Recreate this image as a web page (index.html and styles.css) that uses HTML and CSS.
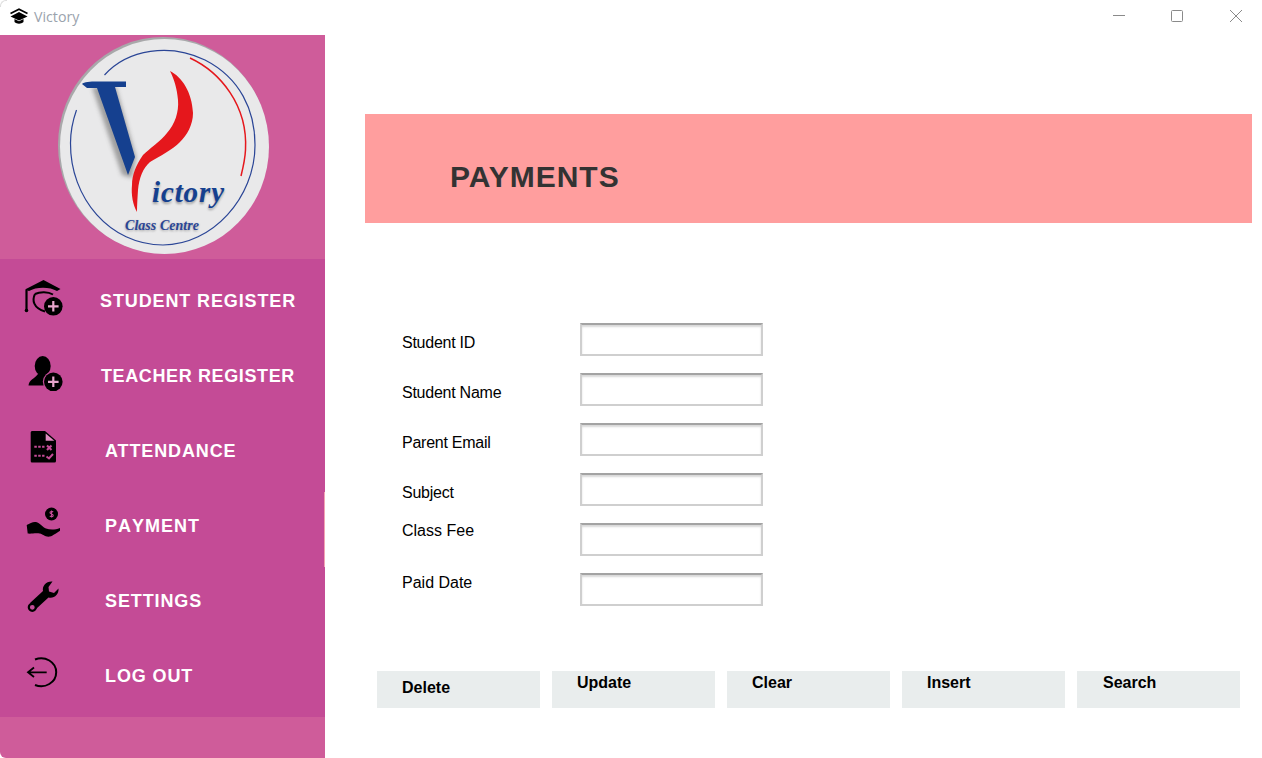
FILE: index.html
```html
<!DOCTYPE html>
<html lang="en">
<head>
<meta charset="utf-8">
<title>Victory</title>
<link rel="stylesheet" href="styles.css">
</head>
<body>
<div class="window">
  <header class="titlebar">
    <div class="app-title">
      <svg class="app-icon" viewBox="0 0 18 16"><path d="M0.500 5.500 L9 1.200 L17.500 5.500" fill="none" stroke="#000" stroke-width="1.700"/><path d="M0.500 8.500 L9 4 L17.500 8.500 L9 12.500 Z" fill="#000"/><path d="M4.500 11 V14 C7 16.300 11 16.300 13.500 14 V11 L9 13.300 Z" fill="#000"/></svg>
      <span>Victory</span>
    </div>
    <div class="win-controls">
      <svg class="win-btn win-min" viewBox="0 0 12 12"><path d="M0 5.500 H12" stroke="#8a8a8a" fill="none"/></svg>
      <svg class="win-btn win-max" viewBox="0 0 12 12"><rect x="0.500" y="0.500" width="11" height="11" rx="1" stroke="#8a8a8a" fill="none"/></svg>
      <svg class="win-btn" viewBox="0 0 12 12"><path d="M0 0 L12 12 M12 0 L0 12" stroke="#8a8a8a" fill="none"/></svg>
    </div>
  </header>
  <div class="content">
    <aside class="sidebar">
      <div class="logo-panel">
        <svg class="logo" viewBox="0 0 215 220">
          <defs>
            <filter id="soft" x="-20%" y="-20%" width="140%" height="140%"><feGaussianBlur stdDeviation="2"/></filter>
            <filter id="soft-sm" x="-20%" y="-40%" width="140%" height="180%"><feGaussianBlur stdDeviation="1"/></filter>
          </defs>
          <g transform="translate(-57 -36)">
            <ellipse cx="163" cy="145" rx="105" ry="108" fill="#a8a8aa"/>
            <ellipse cx="164.500" cy="146.500" rx="104.500" ry="107.500" fill="#e9e9ea"/>
            <path d="M104.500 75 C128 49 170 43 205 60 C240 78 255 110 255 145 C255 198 212 245 163 245 C110 245 70 198 70.500 143 C70.500 130 73 120 76.500 110" fill="none" stroke="#2a4596" stroke-width="1.200"/>
            <path d="M190 58 C220 72 248 105 245.500 150 C245 160 243 168 241 176" fill="none" stroke="#e5171c" stroke-width="1.500"/>
            <path d="M92 87 L122 175 L132 178 L136 157 L116 87 Z" fill="#555" opacity="0.5" filter="url(#soft)"/>
            <path d="M82 84 C84 82 90 81.500 97 81.500 H126 V87 H115 L135 157 L128 175 L97 88 H87 Z" fill="#15408f"/>
            <path d="M170 71 C182 77 192 92 193 113 C193 125 187 135 180 142 C172 150 160 156 150 162 C143 168 139 178 138 190 C137.500 198 137 205 137 212 C133 205 131 195 132 185 C132 175 136 165 143 155 C150 148 160 142 167 133 C175 124 179 112 178 100 C177 88 174 79 170 71 Z" fill="#e5171c"/>
            <text class="logo-word logo-word-shadow" x="152" y="204" textLength="72" filter="url(#soft-sm)">ictory</text>
            <text class="logo-word" x="152" y="202" textLength="72">ictory</text>
            <text class="logo-sub logo-word-shadow" x="125" y="231" textLength="74" filter="url(#soft-sm)">Class Centre</text>
            <text class="logo-sub" x="125" y="230" textLength="74">Class Centre</text>
          </g>
        </svg>
      </div>
      <nav class="nav">
        <a class="nav-item">
          <svg class="nav-icon" viewBox="0 0 40 40"><path d="M19.500 2 L36.500 11 L33 13 C26 8.500 12 8.500 5 13 L1 11.500 Z" fill="#000"/><path d="M2.500 12 V32" stroke="#000" stroke-width="2.200" fill="none"/><circle cx="2.500" cy="32.500" r="1.800" fill="#000"/><path d="M11 16 C8 22 9 30 21 33.500" stroke="#000" stroke-width="2" fill="none"/><path d="M11 16 C16 13.500 24 13.500 29 16.500" stroke="#000" stroke-width="2" fill="none"/><circle cx="29.300" cy="28.300" r="9.300" fill="#000"/><path d="M24 28.300 H34.600 M29.300 23 V33.600" stroke="#e8a6cd" stroke-width="2.200"/></svg>
          <span class="nav-label nav-label-a">STUDENT REGISTER</span>
        </a>
        <a class="nav-item">
          <svg class="nav-icon" viewBox="0 0 40 40"><ellipse cx="18.700" cy="13" rx="8" ry="10" fill="#000"/><path d="M4.500 32.500 C5 27 10 26 14 21 H23 L24 32.500 Z" fill="#000"/><circle cx="29.300" cy="28.800" r="10.500" fill="#c44b96"/><circle cx="29.300" cy="28.800" r="9.300" fill="#000"/><path d="M24 28.800 H34.600 M29.300 23.500 V34.100" stroke="#e8a6cd" stroke-width="2.200"/></svg>
          <span class="nav-label nav-label-b">TEACHER REGISTER</span>
        </a>
        <a class="nav-item">
          <svg class="nav-icon" viewBox="0 0 40 40"><path d="M8 3 H21 L32 12.500 V33 Q32 34.500 30.500 34.500 H8 Q6.700 34.500 6.700 33 V4.500 Q6.700 3 8 3 Z" fill="#000"/><path d="M21.700 5.500 L30.300 12.800 H21.700 Z" fill="#e08ac0"/><path d="M10.300 18.700 H20.500 M10.300 27.700 H20.500" stroke="#c44b96" stroke-width="2" stroke-dasharray="2.500 1.400"/><path d="M23 17.500 L27.500 22 M27.500 17.500 L23 22" stroke="#c44b96" stroke-width="2.100"/><path d="M22.500 28.500 L25 30.500 L29 26" stroke="#c44b96" stroke-width="2" fill="none"/></svg>
          <span class="nav-label nav-label-c">ATTENDANCE</span>
        </a>
        <a class="nav-item">
          <svg class="nav-icon" viewBox="0 0 40 40"><circle cx="27.500" cy="11" r="6.500" fill="#000"/><path d="M27.500 7.500 V14.500 M29.200 9 C28 8 26 8.300 26 9.700 C26 11.300 29.200 10.700 29.200 12.400 C29.200 13.800 27 14 25.800 13" stroke="#c44b96" stroke-width="1.100" fill="none"/><path d="M2.700 22 C6 20 9 18.500 12 19 C16 20 19 24.500 22 25.500 C26 27 31 27 36 25 L36 27.700 C32 30 28 33.700 24.300 33.700 C21 33.700 18 30.500 14.300 30.300 C10 30 7 31 3.700 30.500 Z" fill="#000"/></svg>
          <span class="nav-label nav-label-c nav-label-open">PAYMENT</span>
        </a>
        <a class="nav-item">
          <svg class="nav-icon" viewBox="0 0 40 40"><path d="M28.500 3.500 C22 3 18 8 19 13 L6 25 L12 31 L24.500 19.500 C30 21 35 16.500 34.500 10.500 L30 15 L25 13.500 L24.500 9 Z" fill="#000"/><circle cx="8.300" cy="29.300" r="3.500" fill="#c44b96" stroke="#000" stroke-width="2.200"/></svg>
          <span class="nav-label nav-label-c">SETTINGS</span>
        </a>
        <a class="nav-item">
          <svg class="nav-icon" viewBox="0 0 40 40"><path d="M11 6.500 A15 14 0 1 1 11 32" stroke="#000" stroke-width="2" fill="none"/><path d="M3.700 19.300 H22.700 M10 14.500 L4 19.300 L10 24" stroke="#000" stroke-width="1.800" fill="none"/></svg>
          <span class="nav-label nav-label-c">LOG OUT</span>
        </a>
      </nav>
      <div class="sidebar-foot"></div>
      <span class="active-mark"></span>
    </aside>
    <main class="main">
      <div class="banner"><h1>PAYMENTS</h1></div>
      <form class="form">
        <label class="field-label low">Student ID</label><input class="field" type="text">
        <label class="field-label low">Student Name</label><input class="field" type="text">
        <label class="field-label low">Parent Email</label><input class="field" type="text">
        <label class="field-label low">Subject</label><input class="field" type="text">
        <label class="field-label high">Class Fee</label><input class="field" type="text">
        <label class="field-label top">Paid Date</label><input class="field" type="text">
      </form>
      <div class="actions">
        <button class="action action-low" type="button">Delete</button>
        <button class="action" type="button">Update</button>
        <button class="action" type="button">Clear</button>
        <button class="action" type="button">Insert</button>
        <button class="action action-wide" type="button">Search</button>
      </div>
    </main>
  </div>
</div>
</body>
</html>
```

FILE: styles.css
```css
* { box-sizing: border-box; }
html, body { margin: 0; height: 100%; overflow: hidden; background: #fff; }
body { font-family: "Liberation Sans", Arial, sans-serif; }
.window { width: 1262px; height: 758px; display: flex; flex-direction: column; background: #fff; }
.titlebar { height: 35px; display: flex; justify-content: space-between; align-items: center; padding: 0 20px 3px 10px; position: relative; }
.titlebar::before { content: ""; position: absolute; left: 0; top: 0; width: 6px; height: 6px; border-top: 1px solid #ddd; border-left: 1px solid #ddd; border-top-left-radius: 6px; }
.app-title { display: flex; align-items: center; gap: 6px; font-family: "Open Sans", sans-serif; font-size: 14.200px; color: #9aa3ad; }
.app-icon { width: 18px; height: 16px; display: block; }
.win-controls { display: flex; align-items: center; }
.win-btn { width: 12px; height: 12px; display: block; }
.win-min { margin-right: 46px; }
.win-max { margin-right: 47px; }
.content { flex: 1; display: flex; min-height: 0; }
.sidebar { width: 325px; flex: none; display: flex; flex-direction: column; background: #cf5c9a; position: relative; border-bottom-left-radius: 6px; }
.logo-panel { height: 224px; padding: 1px 0 0 57px; }
.logo { width: 215px; height: 220px; display: block; }
.logo-word { font-family: "Liberation Serif", serif; font-weight: 700; font-style: italic; font-size: 29px; fill: #15408f; }
.logo-sub { font-family: "Liberation Serif", serif; font-weight: 700; font-style: italic; font-size: 14px; fill: #2a4596; }
.logo-word.logo-word-shadow, .logo-sub.logo-word-shadow { fill: #555; opacity: 0.5; }
.nav { height: 458px; padding-top: 4px; background: #c44b96; display: flex; flex-direction: column; }
.nav-item { height: 75px; display: flex; align-items: center; padding-left: 24px; color: #fff; }
.nav-icon { width: 40px; height: 40px; flex: none; margin-top: -6px; overflow: visible; }
.nav-label { font-weight: 700; font-size: 18px; letter-spacing: 0.880px; white-space: nowrap; padding-top: 2px; }
.nav-label-a { margin-left: 36px; }
.nav-label-b { margin-left: 37px; letter-spacing: 0.620px; }
.nav-label-c { margin-left: 41px; }
.nav-label-open { font-kerning: none; letter-spacing: 1px; }
.sidebar-foot { flex: 1; }
.active-mark { position: absolute; left: 324px; top: 457px; width: 1px; height: 75px; background: #f3a3b4; }
.main { flex: 1; min-width: 0; padding: 79px 10px 0 40px; }
.banner { height: 109px; background: #ff9e9e; display: flex; align-items: center; padding: 16px 0 0 85px; }
.banner h1 { margin: 0; font-size: 30px; font-weight: 700; color: #333; letter-spacing: 1px; }
.form { margin-top: 100px; padding-left: 37px; display: grid; grid-template-columns: 178px 183px; grid-auto-rows: 33px; row-gap: 17px; }
.field-label { font-size: 16px; line-height: 18px; color: #000; align-self: start; }
.low { margin-top: 11px; letter-spacing: -0.250px; }
.high { margin-top: -1px; }
.top { margin-top: 1px; }
.field { width: 183px; height: 33px; border: 2px solid #cfcfcf; border-top-color: #a3a3a3; background: #fff; box-shadow: inset 0 2px 2px #d8d8d8; padding: 0; margin: 0; }
.actions { margin-top: 65px; padding-left: 12px; display: flex; gap: 12px; }
.action { width: 163px; height: 37px; border: 0; background: #e9eded; font: 700 16px/18px "Liberation Sans", Arial, sans-serif; color: #000; text-align: left; padding: 3px 0 0 25px; display: flex; align-items: flex-start; }
.action-low { padding-top: 8px; }
.action-wide { padding-left: 26px; }
```
